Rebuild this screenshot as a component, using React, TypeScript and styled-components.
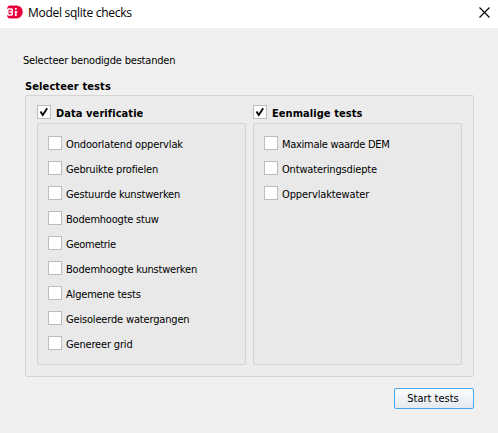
import React, { useState } from "react";
import styled, { createGlobalStyle } from "styled-components";

const GlobalStyle = createGlobalStyle`
  * { box-sizing: border-box; }
  body { margin: 0; background: #f0f0f0; overflow: hidden; }
`;

const Dialog = styled.main`
  display: flex;
  flex-direction: column;
  width: 498px;
  height: 433px;
  background: #f0f0f0;
  color: #000;
  font-family: "DejaVu Sans Condensed", "DejaVu Sans", sans-serif;
  font-stretch: condensed;
  font-size: 11px;
  line-height: 14px;
  white-space: nowrap;
`;

const TitleBar = styled.header`
  display: flex;
  align-items: center;
  height: 28px;
  padding: 0 8px 4px 7px;
  background: #fff;
`;

const Title = styled.h1`
  flex: 1;
  margin: 0 0 0 5px;
  font: 400 12px/16px "Open Sans", "Noto Sans", sans-serif;
  letter-spacing: -0.29px;
  padding-top: 2px;
`;

const CloseButton = styled.button`
  display: flex;
  padding: 0;
  border: 0;
  background: none;
`;

const Content = styled.div`
  display: flex;
  flex-direction: column;
  padding: 26px 24px 0 25px;
`;

const Text = styled.span<{ $tracking?: number }>`
  letter-spacing: ${(p) => p.$tracking ?? 0}px;
`;

const Intro = styled.p`
  margin: 0 0 12px -2px;
`;

const GroupTitle = styled.h2`
  margin: 0 0 1px;
  font-size: 11px;
  line-height: 14px;
  font-weight: 700;
`;

const Group = styled.section`
  display: flex;
  gap: 7px;
  width: 449px;
  height: 282px;
  padding: 9px 11px 11px;
  border: 1px solid #d5d5d5;
  border-radius: 2px;
  background: #ececec;
`;

const Column = styled.div`
  display: flex;
  flex-direction: column;
  width: 209px;
`;

const CheckLabel = styled.label<{ $bold?: boolean }>`
  display: flex;
  align-items: center;
  gap: ${(p) => (p.$bold ? 5 : 4)}px;
  height: 14px;
  font-weight: ${(p) => (p.$bold ? 700 : 400)};

  ${Text} {
    padding-top: 3px;
  }
`;

const CheckInput = styled.input`
  appearance: none;
  position: absolute;
  margin: 0;
`;

const CheckBox = styled.span`
  display: flex;
  flex: none;
  width: 14px;
  height: 14px;
  border: 1px solid #bcbcbc;
  background: #fff;
`;

const Panel = styled.div`
  display: flex;
  flex: 1;
  flex-direction: column;
  gap: 11px;
  margin-top: 4px;
  padding: 12px 10px;
  border: 1px solid #d2d2d2;
  border-radius: 2px;
  background: #e9e9e9;
`;

const Actions = styled.footer`
  display: flex;
  justify-content: flex-end;
  margin-top: 11px;
`;

const StartButton = styled.button`
  width: 80px;
  height: 21px;
  padding: 1px 2px 0 0;
  border: 1px solid #45a9f5;
  border-radius: 2px;
  background: linear-gradient(#fbfcfd, #e5eaf0);
  color: #000;
  font: inherit;
`;

type Option = { label: string; tracking?: number };

const verification: Option[] = [
  { label: "Ondoorlatend oppervlak", tracking: -0.15 },
  { label: "Gebruikte profielen", tracking: -0.19 },
  { label: "Gestuurde kunstwerken", tracking: -0.17 },
  { label: "Bodemhoogte stuw", tracking: -0.21 },
  { label: "Geometrie", tracking: -0.27 },
  { label: "Bodemhoogte kunstwerken", tracking: -0.2 },
  { label: "Algemene tests", tracking: -0.19 },
  { label: "Geisoleerde watergangen", tracking: -0.17 },
  { label: "Genereer grid", tracking: -0.17 },
];

const singleTests: Option[] = [
  { label: "Maximale waarde DEM", tracking: -0.28 },
  { label: "Ontwateringsdiepte", tracking: -0.17 },
  { label: "Oppervlaktewater", tracking: -0.12 },
];

function Logo() {
  return (
    <svg width="16" height="14" viewBox="0 0 16 14" aria-label="3Di">
      <path
        d="M3 .4H9.5a6.3 6.5 0 0 1 0 13H3Q.3 13.4.2 10.4L1.6 9.2 1.6 4.6.2 3.4Q.5.4 3 .4Z"
        fill="#e6003c"
      />
      <path
        d="M1 4H4.4Q5.4 4 5.4 5T4.4 6.9H2.4 4.4Q5.4 6.9 5.4 8.4T4.4 9.9H1"
        fill="none"
        stroke="#fff"
        strokeWidth="1.5"
      />
      <path d="M8.8 3v1.7M8.8 5.9v5" fill="none" stroke="#fff" strokeWidth="1.7" />
      <path d="M7.2 6.9h3.6" fill="none" stroke="#fff" strokeWidth="1" opacity=".6" />
    </svg>
  );
}

function Check({ label, tracking, bold }: Option & { bold?: boolean }) {
  const [checked, setChecked] = useState(!!bold);
  return (
    <CheckLabel $bold={bold}>
      <CheckInput type="checkbox" checked={checked} onChange={() => setChecked(!checked)} />
      <CheckBox>
        {checked && (
          <svg width="12" height="12" viewBox="0 0 12 12">
            <path d="M2.5 5.5 4.7 9 9.2 2.2" fill="none" stroke="#000" strokeWidth="1.8" />
          </svg>
        )}
      </CheckBox>
      <Text $tracking={tracking}>{label}</Text>
    </CheckLabel>
  );
}

function TestColumn({ title, options }: { title: Option; options: Option[] }) {
  return (
    <Column>
      <Check {...title} bold />
      <Panel>
        {options.map((option) => (
          <Check key={option.label} {...option} />
        ))}
      </Panel>
    </Column>
  );
}

export default function App() {
  return (
    <>
      <GlobalStyle />
      <Dialog>
        <TitleBar>
          <Logo />
          <Title>Model sqlite checks</Title>
          <CloseButton aria-label="Close">
            <svg width="11" height="11" viewBox="0 0 11 11">
              <path d="M.5.5l10 10M10.5.5l-10 10" stroke="#000" strokeWidth="1.1" />
            </svg>
          </CloseButton>
        </TitleBar>
        <Content>
          <Intro><Text $tracking={-0.19}>Selecteer benodigde bestanden</Text></Intro>
          <GroupTitle><Text $tracking={0.11}>Selecteer tests</Text></GroupTitle>
          <Group>
            <TestColumn title={{ label: "Data verificatie", tracking: 0.07 }} options={verification} />
            <TestColumn title={{ label: "Eenmalige tests", tracking: 0.06 }} options={singleTests} />
          </Group>
          <Actions>
            <StartButton><Text>Start tests</Text></StartButton>
          </Actions>
        </Content>
      </Dialog>
    </>
  );
}
